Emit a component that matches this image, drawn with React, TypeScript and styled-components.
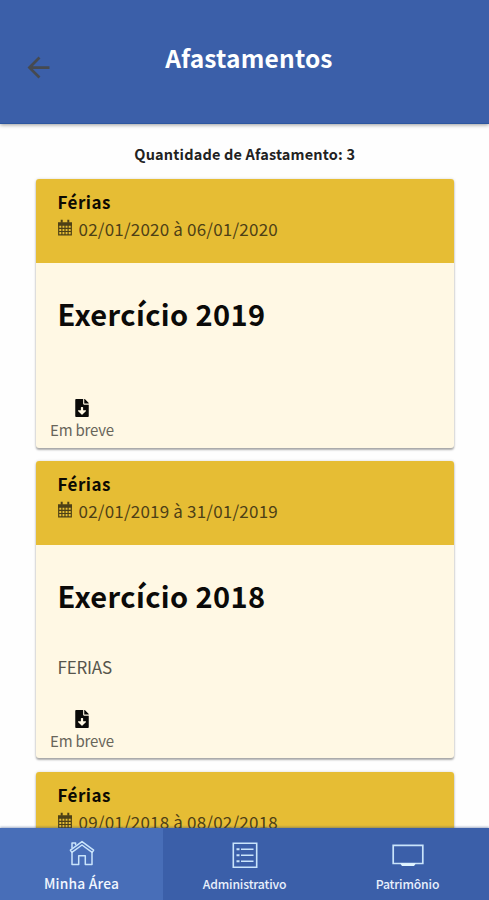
import React from "react";
import styled, { createGlobalStyle } from "styled-components";
import { MdArrowBack } from "react-icons/md";
import { FaFileDownload } from "react-icons/fa";

const GlobalStyle = createGlobalStyle`
  * { box-sizing: border-box; }
  body {
    margin: 0;
    background: #fff;
    font-family: "Noto Sans CJK SC", "Noto Sans", sans-serif;
  }
`;

const Screen = styled.div`
  display: flex;
  flex-direction: column;
  width: 100%;
  height: 900px;
  overflow: hidden;
  background: #fefefe;
`;

const Header = styled.header`
  flex: none;
  display: grid;
  grid-template-columns: 78px 1fr 69px;
  height: 124px;
  background: #3b5fa9;
  border-bottom: 1px solid #2c569f;
  box-shadow: 0 1px 4px rgba(0, 0, 0, 0.4);
  z-index: 1;
`;

const BackButton = styled.button`
  display: flex;
  justify-content: center;
  width: 33px;
  height: 33px;
  margin: 51px 0 0 22px;
  padding: 0;
  border: 0;
  background: none;
  color: #464a50;
`;

const Title = styled.h1`
  margin: 38px 0 0;
  text-align: center;
  color: #fff;
  font-size: 24.5px;
  font-weight: 700;
  letter-spacing: 0.2px;
  line-height: 40px;
`;

const Content = styled.main`
  flex: 1;
  min-height: 0;
  overflow: hidden;
  padding: 19px 35px 0 35.5px;
`;

const Count = styled.p`
  margin: 0 0 15px;
  text-align: center;
  color: #222;
  font-size: 14.5px;
  font-weight: 700;
  letter-spacing: 0.18px;
  line-height: 21px;
`;

const Card = styled.article`
  margin-bottom: 13.5px;
  overflow: hidden;
  border-radius: 3px;
  background: #fff8e4;
  box-shadow: 0 2px 2px rgba(0, 0, 0, 0.3), 0 0 3px rgba(0, 0, 0, 0.16);
`;

const CardHead = styled.div`
  height: 84px;
  padding: 11px 22px 0;
  background: #e6bd34;
`;

const Kind = styled.div`
  color: #0d0a02;
  font-size: 17px;
  font-weight: 700;
  letter-spacing: 0.45px;
  line-height: 24px;
`;

const Period = styled.div`
  display: flex;
  align-items: center;
  gap: 7px;
  height: 29px;
  color: #4d4016;
  font-size: 17px;
  letter-spacing: 0.2px;
  line-height: 29px;
  white-space: nowrap;

  svg {
    margin-top: -2px;
  }
`;

const CardBody = styled.div`
  display: flex;
  flex-direction: column;
  align-items: flex-start;
  padding: 29.5px 22px 7.5px;
`;

const Exercise = styled.h2`
  margin: 0 0 38px;
  color: #0b0a08;
  font-size: 29px;
  font-weight: 700;
  letter-spacing: 0.4px;
  line-height: 40px;
  white-space: nowrap;
`;

const Description = styled.p`
  margin: 0 0 28.5px;
  color: #57554c;
  font-size: 17px;
  letter-spacing: -0.2px;
  line-height: 28.5px;

  &:empty {
    height: 0;
  }
`;

const Download = styled.div`
  display: flex;
  flex-direction: column;
  align-items: center;
  gap: 3px;
  width: 80px;
  margin-left: -15.5px;
  color: #0a0a08;
`;

const DownloadLabel = styled.span`
  color: #68655a;
  font-size: 15px;
  letter-spacing: -0.2px;
  line-height: 20px;
`;

const Nav = styled.nav`
  flex: none;
  display: grid;
  grid-template-columns: repeat(3, 1fr);
  height: 72px;
  background: #3b5fa9;
  box-shadow: 0 -1px 2px rgba(30, 60, 120, 0.4);
  z-index: 1;
`;

const Tab = styled.a<{ $active?: boolean }>`
  display: flex;
  flex-direction: column;
  align-items: center;
  gap: ${(p) => (p.$active ? 4.5 : 6)}px;
  padding-top: 11px;
  background: ${(p) => (p.$active ? "#486eb8" : "transparent")};
`;

const TabLabel = styled.span<{ $active?: boolean }>`
  color: ${(p) => (p.$active ? "#f2f7ff" : "#e8f0fc")};
  font-size: ${(p) => (p.$active ? 13.8 : 12.2)}px;
  font-weight: 500;
  letter-spacing: ${(p) => (p.$active ? 0.2 : -0.15)}px;
  line-height: 20px;
`;

const CalendarIcon = () => (
  <svg width="14" height="17" viewBox="0 0 14 17" fill="none" stroke="currentColor">
    <path d="M0 3.2h14v3.6H0z" fill="currentColor" stroke="none" />
    <path d="M3.7.8v3M10.3.8v3" strokeWidth="2" />
    <path d="M.7 6v9.8h12.6V6M.7 9.3h12.6M.7 12.5h12.6M3.9 6v10M7 6v10M10.1 6v10" strokeWidth="1.2" />
  </svg>
);

const HomeIcon = () => (
  <svg width="28" height="29" viewBox="0 0 28 29" fill="none" stroke="#c9e4fb" strokeWidth="1.5" strokeLinejoin="round">
    <path d="M4 9.2V3.9h3.6v2.4" />
    <path d="M14 2.6 2.4 11.2l1.5 2.1L14 6l10.1 7.3 1.5-2.1z" />
    <path d="M4 13v12.4h6.7v-8.6h6.6v8.6H24V13" />
  </svg>
);

const ListIcon = () => (
  <svg width="26" height="29" viewBox="0 0 26 29" fill="none" stroke="#c9e4fb" strokeWidth="1.6">
    <path d="M1.3 4.2h23.4v24H1.3z" />
    <path d="M4.5 10.2h3M4.5 16.2h3M4.5 22.2h3" strokeWidth="2" />
    <path d="M9 10.2h12.5M9 16.2h12.5M9 22.2h12.5" />
  </svg>
);

const MonitorIcon = () => (
  <svg width="32" height="29" viewBox="0 0 32 29" fill="none" stroke="#c9e4fb" strokeWidth="1.7">
    <path d="M1.2 6.3h29.6v18.2H1.2z" />
    <path d="M8 24.2h16l-2 2.7H10z" fill="#e0f4ff" stroke="none" />
  </svg>
);

const leaves = [
  { period: "02/01/2020 à 06/01/2020", title: "Exercício 2019", note: "" },
  { period: "02/01/2019 à 31/01/2019", title: "Exercício 2018", note: "FERIAS" },
  { period: "09/01/2018 à 08/02/2018", title: "", note: "" },
];

const tabs = [
  { label: "Minha Área", icon: <HomeIcon />, active: true },
  { label: "Administrativo", icon: <ListIcon />, active: false },
  { label: "Patrimônio", icon: <MonitorIcon />, active: false },
];

export default function App() {
  return (
    <Screen>
      <GlobalStyle />
      <Header>
        <BackButton aria-label="Voltar">
          <MdArrowBack size={33} />
        </BackButton>
        <Title>Afastamentos</Title>
      </Header>
      <Content>
        <Count>Quantidade de Afastamento: 3</Count>
        {leaves.map((leave) => (
          <Card key={leave.period}>
            <CardHead>
              <Kind>Férias</Kind>
              <Period>
                <CalendarIcon />
                <span>{leave.period}</span>
              </Period>
            </CardHead>
            {leave.title && (
              <CardBody>
                <Exercise>{leave.title}</Exercise>
                <Description>{leave.note}</Description>
                <Download>
                  <FaFileDownload size={18} />
                  <DownloadLabel>Em breve</DownloadLabel>
                </Download>
              </CardBody>
            )}
          </Card>
        ))}
      </Content>
      <Nav>
        {tabs.map((tab) => (
          <Tab key={tab.label} $active={tab.active}>
            {tab.icon}
            <TabLabel $active={tab.active}>{tab.label}</TabLabel>
          </Tab>
        ))}
      </Nav>
    </Screen>
  );
}
